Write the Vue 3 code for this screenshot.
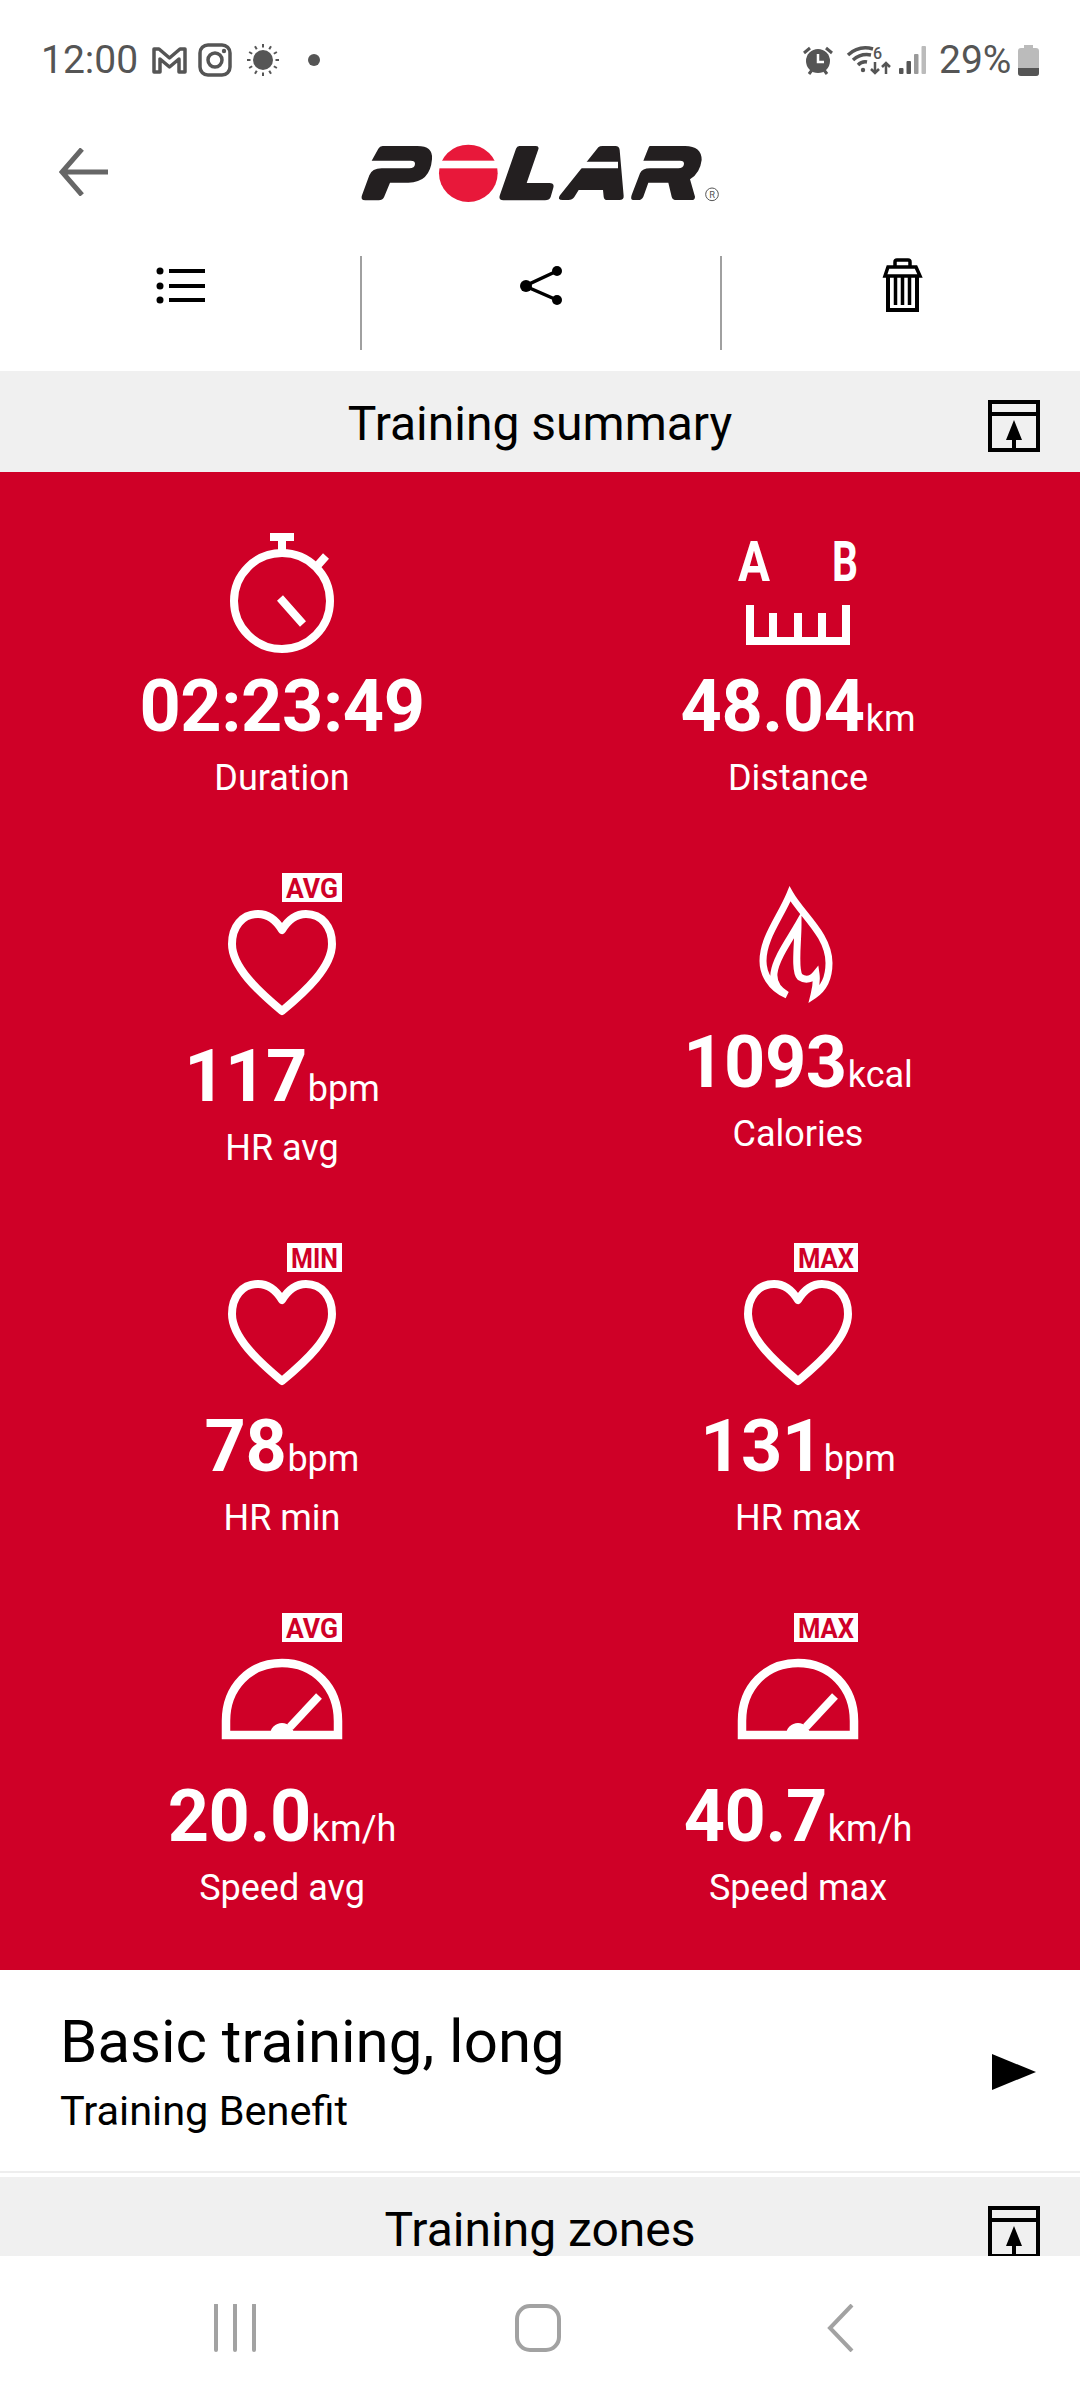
<script setup>
const stats = [
  { id: 'duration', icon: 'watch', value: '02:23:49', unit: '', label: 'Duration' },
  { id: 'distance', icon: 'ruler', value: '48.04', unit: 'km', label: 'Distance' },
  { id: 'hravg', icon: 'heart', badge: 'AVG', badgeW: 60, value: '117', unit: 'bpm', label: 'HR avg' },
  { id: 'calories', icon: 'flame', value: '1093', unit: 'kcal', label: 'Calories', short: true },
  { id: 'hrmin', icon: 'heart', badge: 'MIN', badgeW: 55, value: '78', unit: 'bpm', label: 'HR min' },
  { id: 'hrmax', icon: 'heart', badge: 'MAX', badgeW: 64, value: '131', unit: 'bpm', label: 'HR max' },
  { id: 'speedavg', icon: 'gauge', badge: 'AVG', badgeW: 60, value: '20.0', unit: 'km/h', label: 'Speed avg' },
  { id: 'speedmax', icon: 'gauge', badge: 'MAX', badgeW: 64, value: '40.7', unit: 'km/h', label: 'Speed max' },
]

// sun rays in the status bar
const rays = Array.from({ length: 12 }, (_, i) => i * 30)
</script>

<template>
  <div class="phone">
    <div class="status">
      <div class="status-left">
        <span class="clock">12:00</span>
        <svg class="st-gmail" width="35" height="27" viewBox="0 0 35 27">
          <path d="M2 25V2h5l10.500 9L28 2h5v23h-6V12l-9.500 8L8 12v13z" fill="none" stroke="#555" stroke-width="3.500" stroke-linejoin="round" />
        </svg>
        <svg class="st-insta" width="34" height="34" viewBox="0 0 34 34">
          <rect x="2" y="2" width="30" height="30" rx="8" fill="none" stroke="#555" stroke-width="3.500" />
          <circle cx="17" cy="17" r="7" fill="none" stroke="#555" stroke-width="3.500" />
          <circle cx="26" cy="8" r="2.200" fill="#555" />
        </svg>
        <svg class="st-sun" width="32" height="32" viewBox="0 0 32 32">
          <circle cx="16" cy="16" r="10" fill="#555" />
          <rect v-for="r in rays" :key="r" x="15" y="0" width="2" height="3.500" fill="#555" :transform="`rotate(${r} 16 16)`" />
        </svg>
        <span class="st-dot"></span>
      </div>
      <div class="status-right">
        <svg class="st-alarm" width="30" height="30" viewBox="0 0 30 30">
          <circle cx="15" cy="16" r="12" fill="#555" />
          <path d="M1 8l6-5M29 8l-6-5M6 29l3-4M24 29l-3-4" stroke="#555" stroke-width="3" fill="none" />
          <path d="M15 9v8h6" stroke="#fff" stroke-width="2.500" fill="none" />
        </svg>
        <svg class="st-wifi" width="44" height="30" viewBox="0 0 44 30">
          <path d="M1 10Q12 0 26 4M6 15Q14 8 24 10M11 20Q15 16 20 17" fill="none" stroke="#555" stroke-width="3.500" />
          <circle cx="16" cy="25" r="2.200" fill="#555" />
          <text x="26" y="14" class="wifi-six">6</text>
          <path d="M28 17v11M24 24l4 4 4-4M39 29V18M35 22l4-4 4 4" fill="none" stroke="#555" stroke-width="2.500" />
        </svg>
        <svg class="st-signal" width="27" height="30" viewBox="0 0 27 30">
          <rect x="0" y="23" width="4.500" height="6" rx="1" fill="#555" />
          <rect x="7.500" y="16" width="4.500" height="13" rx="1" fill="#555" />
          <rect x="15" y="9" width="4.500" height="20" rx="1" fill="#999" />
          <rect x="22.500" y="1" width="4.500" height="28" rx="1" fill="#bbb" />
        </svg>
        <span class="percent">29%</span>
        <svg class="st-batt" width="21" height="31" viewBox="0 0 21 31">
          <path d="M6 0h9v3h3q3 0 3 3v22q0 3-3 3H3q-3 0-3-3V6q0-3 3-3h3z" fill="#bbb" />
          <path d="M0 23h21v5q0 3-3 3H3q-3 0-3-3z" fill="#555" />
        </svg>
      </div>
    </div>

    <div class="brand">
      <svg class="back" width="50" height="48" viewBox="0 0 50 48">
        <path d="M49 24H5M23 1L3 24l20 23" fill="none" stroke="#666" stroke-width="5" />
      </svg>
      <svg class="logo" width="400" height="100" viewBox="0 0 1200 300">
        <path fill="#231f20" d="M128 72H232Q280 72 276 112Q270 182 205 182H150L132 226Q128 235 116 235H76Q60 235 66 220L88 160Q96 139 125 139H208Q224 139 225 126Q226 116 212 116H95L115 80Q119 72 128 72Z" />
        <ellipse cx="385" cy="154" rx="88" ry="86" fill="#e8183a" />
        <rect x="290" y="116" width="190" height="23" fill="#fff" />
        <path fill="#231f20" d="M538 72H588Q598 72 595 82L560 183H628Q644 183 640 197L632 225Q628 235 615 235H490Q474 235 480 218L528 80Q531 72 538 72Z" />
        <path fill="#231f20" d="M775 76Q779 72 788 72H826Q838 72 839 84L851 222Q852 234 838 234H802Q792 234 791 224L789 204H716L703 225Q697 234 685 234H668Q650 234 660 220Z" />
        <path fill="#fff" d="M735 119H834V139H712Z" />
        <path fill="#231f20" d="M930 72H1035Q1085 72 1085 114Q1080 154 1050 172L1065 224Q1065 234 1055 234H1010Q997 234 995 224L985 182H925L910 224Q905 234 895 234H880Q870 234 875 219L900 154Q907 139 930 139H1015Q1030 139 1032 126Q1033 116 1020 116H910L925 79Q927 72 930 72Z" />
        <circle cx="1116" cy="217" r="19" fill="none" stroke="#555" stroke-width="3" />
        <text x="1116" y="227" class="logo-r">R</text>
      </svg>
    </div>

    <div class="tools">
      <div class="tool">
        <svg width="60" height="60" viewBox="0 0 60 60">
          <circle cx="9" cy="15" r="3.500" />
          <circle cx="9" cy="30" r="3.500" />
          <circle cx="9" cy="44" r="3.500" />
          <path d="M18 15h36M18 30h36M18 44h36" stroke="#000" stroke-width="4" />
        </svg>
      </div>
      <div class="tool tool--sep">
        <svg width="60" height="60" viewBox="0 0 60 60">
          <path d="M46 15L14 30l32 14" fill="none" stroke="#000" stroke-width="3.500" />
          <circle cx="15" cy="30" r="6" />
          <circle cx="46" cy="15" r="5" />
          <circle cx="46" cy="44" r="5" />
        </svg>
      </div>
      <div class="tool tool--sep">
        <svg width="60" height="60" viewBox="0 0 60 60">
          <path d="M24 12V6q0-2 2-2h11q2 0 2 2v6" fill="none" stroke="#000" stroke-width="3.500" />
          <path d="M17 11h28l4 9H14z" fill="none" stroke="#000" stroke-width="3.500" />
          <path d="M17 20v34h29V20" fill="none" stroke="#000" stroke-width="4" />
          <path d="M24.500 21v28M31.500 21v28M38.500 21v28" stroke="#000" stroke-width="3.500" />
        </svg>
      </div>
    </div>

    <div class="scroll">
      <div class="bar">
        <span class="bar-title">Training summary</span>
        <svg class="bar-icon" width="52" height="52" viewBox="0 0 52 52">
          <path d="M2 2h48v48H2zM2 14h48" fill="none" stroke="#000" stroke-width="4" />
          <path d="M26 20l8 20h-6v10h-4V40h-6z" />
        </svg>
      </div>

      <div class="stats">
        <div v-for="s in stats" :key="s.id" class="stat" :class="{ 'stat--short': s.short }">
          <div class="stat-icon">
            <svg width="160" height="160" viewBox="0 0 160 160">
              <g v-if="s.badge">
                <rect :x="140 - s.badgeW" y="0" :width="s.badgeW" height="29" fill="#fff" />
                <text :x="140 - s.badgeW / 2" y="25" class="badge-text" :textLength="s.badgeW - 8" lengthAdjust="spacingAndGlyphs">{{ s.badge }}</text>
              </g>
              <g v-if="s.icon === 'watch'" fill="none" stroke="#fff" stroke-width="8">
                <circle cx="80" cy="98" r="48" />
                <path d="M68 34h24M80 34v16M116 62l8-9M78 95l23 26" />
              </g>
              <g v-else-if="s.icon === 'ruler'">
                <text x="36" y="78" class="ab" textLength="32" lengthAdjust="spacingAndGlyphs">A</text>
                <text x="127" y="78" class="ab" textLength="26" lengthAdjust="spacingAndGlyphs">B</text>
                <path d="M32 102v36h96v-36M55 110v28M80 110v28M104 110v28" fill="none" stroke="#fff" stroke-width="8" />
              </g>
              <path v-else-if="s.icon === 'heart'" d="M80 57C74 47 66 41 56 41C40 41 30 54 30 71C30 94 56 118 80 138C104 118 130 94 130 71C130 54 120 41 104 41C94 41 86 47 80 57Z" fill="none" stroke="#fff" stroke-width="8" stroke-linejoin="round" />
              <path v-else-if="s.icon === 'flame'" d="M69 122C52 115 45 100 45 88C45 65 62 45 72 21C84 42 111 62 111 90C111 105 105 116 96 122C98 114 99 108 98 101C94 106 88 108 82 104C76 98 80 70 80 52C72 66 58 85 56 100C55 110 60 117 69 122Z" fill="none" stroke="#fff" stroke-width="7" />
              <g v-else-if="s.icon === 'gauge'">
                <path d="M24 122H136V108C136 74 112 50 80 50C48 50 24 74 24 108Z" fill="none" stroke="#fff" stroke-width="8.500" />
                <path d="M88 114L117 83" stroke="#fff" stroke-width="8" />
                <path d="M68 122a12 12 0 0 1 24 0z" fill="#fff" />
              </g>
            </svg>
          </div>
          <div class="stat-value">{{ s.value }}<span v-if="s.unit" class="stat-unit">{{ s.unit }}</span></div>
          <div class="stat-label">{{ s.label }}</div>
        </div>
      </div>

      <div class="benefit">
        <div>
          <div class="benefit-title">Basic training, long</div>
          <div class="benefit-sub">Training Benefit</div>
        </div>
        <svg class="benefit-arrow" width="44" height="36" viewBox="0 0 44 36">
          <path d="M0 0l44 18L0 36z" />
        </svg>
      </div>

      <div class="divider"></div>

      <div class="bar bar--zones">
        <span class="bar-title">Training zones</span>
        <svg class="bar-icon" width="52" height="52" viewBox="0 0 52 52">
          <path d="M2 2h48v48H2zM2 14h48" fill="none" stroke="#000" stroke-width="4" />
          <path d="M26 20l8 20h-6v10h-4V40h-6z" />
        </svg>
      </div>
    </div>

    <div class="nav">
      <div class="nav-item">
        <svg width="44" height="48" viewBox="0 0 44 48">
          <path d="M3 1v45M22 1v45M41 1v45" stroke="#a2a2a2" stroke-width="4" stroke-linecap="round" />
        </svg>
      </div>
      <div class="nav-item">
        <svg width="48" height="48" viewBox="0 0 48 48">
          <rect x="3" y="2" width="42" height="44" rx="13" fill="none" stroke="#a2a2a2" stroke-width="4" />
        </svg>
      </div>
      <div class="nav-item">
        <svg width="28" height="48" viewBox="0 0 28 48">
          <path d="M25 1L3 24l22 23" fill="none" stroke="#a2a2a2" stroke-width="4" />
        </svg>
      </div>
    </div>
  </div>
</template>

<style scoped>
.phone {
  width: 1080px;
  height: 2400px;
  display: flex;
  flex-direction: column;
  overflow: hidden;
  background: #fff;
  font-family: Roboto, "Liberation Sans", sans-serif;
  color: #000;
}

.status {
  height: 120px;
  flex-shrink: 0;
  display: flex;
  align-items: center;
  justify-content: space-between;
  padding: 0 41px 0 41px;
  color: #555;
}
.status-left,
.status-right { display: flex; align-items: center; }
.clock { font-size: 39px; width: 111px; }
.st-gmail { margin-right: 11px; }
.st-insta { margin-right: 15px; }
.st-dot {
  width: 12px;
  height: 12px;
  border-radius: 50%;
  background: #555;
  margin-left: 29px;
}
.st-wifi { margin-left: 14px; overflow: visible; }
.st-signal { margin-left: 8px; }
.percent { font-size: 39px; margin-left: 13px; width: 79px; }
.wifi-six { font: 500 16px Roboto, sans-serif; fill: #555; }

.brand {
  height: 104px;
  flex-shrink: 0;
  position: relative;
  display: flex;
  align-items: center;
  justify-content: center;
}
.back { position: absolute; left: 59px; top: 28px; }
.logo-r { font: 400 28px Roboto, sans-serif; text-anchor: middle; fill: #555; }

.tools {
  height: 94px;
  margin: 32px 0 21px;
  padding-left: 2px;
  flex-shrink: 0;
  display: flex;
}
.tool {
  flex: 1;
  display: flex;
  justify-content: center;
  align-items: flex-start;
}
.tool--sep { border-left: 2px solid #a0a0a0; }

.scroll {
  flex: 1;
  min-height: 0;
  overflow: hidden;
}

.bar {
  height: 101px;
  background: #f0f0f0;
  position: relative;
  display: flex;
  align-items: center;
  justify-content: center;
}
.bar-title { font-size: 48px; padding-top: 4px; }
.bar-icon { position: absolute; right: 40px; top: 29px; }

.stats {
  height: 1498px;
  box-sizing: border-box;
  background: #cf0027;
  padding: 31px 24px 0;
  display: grid;
  grid-template-columns: 1fr 1fr;
  grid-auto-rows: 370px;
  color: #fff;
}
.stat {
  display: flex;
  flex-direction: column;
  align-items: center;
}
.stat-icon { height: 168px; }
.stat-icon svg { display: block; overflow: visible; }
.stat--short .stat-icon { height: 154px; }
.stat-value {
  font-size: 72px;
  font-weight: 700;
  line-height: 72px;
  letter-spacing: -0.4px;
  white-space: nowrap;
}
.stat-unit {
  font-size: 36px;
  font-weight: 400;
  line-height: 1;
  letter-spacing: 0;
  margin-left: 1px;
}
.stat-label {
  font-size: 36px;
  line-height: 44px;
  margin-top: 13px;
}
.badge-text {
  font: 700 28px Roboto, sans-serif;
  fill: #cf0027;
  text-anchor: middle;
}
.ab {
  font: 700 56px Roboto, sans-serif;
  fill: #fff;
  text-anchor: middle;
}

.benefit {
  height: 201px;
  box-sizing: border-box;
  padding: 2px 44px 0 60px;
  display: flex;
  align-items: center;
  justify-content: space-between;
}
.benefit-title { font-size: 60px; line-height: 68px; }
.benefit-sub { font-size: 41.5px; line-height: 48px; margin-top: 11px; }

.divider {
  height: 2px;
  background: #eee;
  margin-bottom: 4px;
}

.nav {
  height: 144px;
  flex-shrink: 0;
  background: #fff;
  box-sizing: border-box;
  padding: 48px 0 0 83px;
  display: grid;
  grid-template-columns: repeat(3, 303px);
}
.nav-item { display: flex; justify-content: center; align-items: flex-start; }
</style>
